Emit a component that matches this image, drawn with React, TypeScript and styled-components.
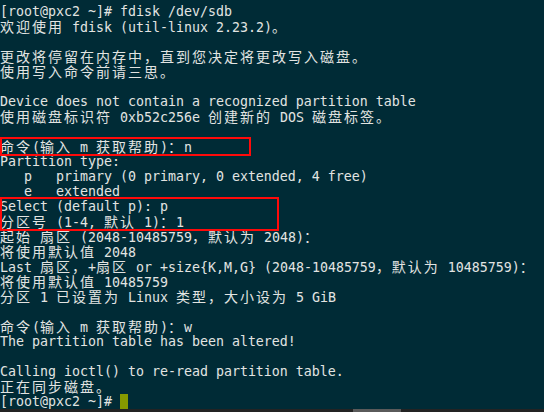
import React from "react";
import styled, { createGlobalStyle } from "styled-components";

const Global = createGlobalStyle`
  html, body {
    margin: 0;
    padding: 0;
    background: #002b36;
    width: 544px;
    height: 412px;
    overflow: hidden;
  }
`;

const Screen = styled.div`
  position: relative;
  width: 544px;
  height: 412px;
  background: #002b36;
  color: #e2e4e2;
  font-family: "DejaVu Sans Mono", "Liberation Mono", monospace;
  font-size: 13.29px;
  display: flex;
  flex-direction: column;
  overflow: hidden;
`;

const Output = styled.div`
  padding-top: 4px;
  display: flex;
  flex-direction: column;
  flex: 1;
`;

const Row = styled.div`
  height: 15px;
  line-height: 15px;
  white-space: pre;
  overflow: visible;
`;

const Wide = styled.span`
  font-family: "Noto Sans CJK SC", "Noto Sans CJK JP", sans-serif;
  font-size: 14px;
  letter-spacing: 2px;
  line-height: 15px;
`;

const Highlight = styled.div<{ $w: number }>`
  position: relative;
  &::after {
    content: "";
    position: absolute;
    left: 0;
    top: -2px;
    width: ${(p) => p.$w}px;
    height: calc(100% + 4px);
    border: 2px solid #ff0a0a;
    box-sizing: border-box;
    pointer-events: none;
  }
`;

const Cursor = styled.span`
  display: inline-block;
  width: 8px;
  height: 15px;
  background: #859900;
  vertical-align: top;
`;

const ScrollTrack = styled.div`
  position: absolute;
  left: 0;
  right: 0;
  bottom: 0;
  height: 3px;
  background: #232323;
`;

const ScrollThumb = styled.div`
  position: absolute;
  left: 353px;
  width: 48px;
  top: 0;
  bottom: 0;
  background: #5a5a5a;
`;

const CJK = /([\u3000-\u303f\u4e00-\u9fff\uff00-\uffef]+)/;

function TermLine({ text, children }: { text: string; children?: React.ReactNode }) {
  const parts = text.split(CJK);
  return (
    <Row>
      {parts.map((p, i) =>
        p === "" ? null : CJK.test(p) ? <Wide key={i}>{p}</Wide> : <React.Fragment key={i}>{p}</React.Fragment>
      )}
      {children}
    </Row>
  );
}

export default function App() {
  return (
    <>
      <Global />
      <Screen>
        <Output>
          <TermLine text="[root@pxc2 ~]# fdisk /dev/sdb" />
          <TermLine text="欢迎使用 fdisk (util-linux 2.23.2)。" />
          <TermLine text="" />
          <TermLine text="更改将停留在内存中，直到您决定将更改写入磁盘。" />
          <TermLine text="使用写入命令前请三思。" />
          <TermLine text="" />
          <TermLine text="Device does not contain a recognized partition table" />
          <TermLine text="使用磁盘标识符 0xb52c256e 创建新的 DOS 磁盘标签。" />
          <TermLine text="" />
          <Highlight $w={251}>
            <TermLine text="命令(输入 m 获取帮助)：n" />
          </Highlight>
          <TermLine text="Partition type:" />
          <TermLine text="   p   primary (0 primary, 0 extended, 4 free)" />
          <TermLine text="   e   extended" />
          <Highlight $w={279}>
            <TermLine text="Select (default p): p" />
            <TermLine text="分区号 (1-4, 默认 1)：1" />
          </Highlight>
          <TermLine text="起始 扇区 (2048-10485759，默认为 2048)：" />
          <TermLine text="将使用默认值 2048" />
          <TermLine text="Last 扇区，+扇区 or +size{K,M,G} (2048-10485759，默认为 10485759)：" />
          <TermLine text="将使用默认值 10485759" />
          <TermLine text="分区 1 已设置为 Linux 类型，大小设为 5 GiB" />
          <TermLine text="" />
          <TermLine text="命令(输入 m 获取帮助)：w" />
          <TermLine text="The partition table has been altered!" />
          <TermLine text="" />
          <TermLine text="Calling ioctl() to re-read partition table." />
          <TermLine text="正在同步磁盘。" />
          <TermLine text="[root@pxc2 ~]# ">
            <Cursor />
          </TermLine>
        </Output>
        <ScrollTrack>
          <ScrollThumb />
        </ScrollTrack>
      </Screen>
    </>
  );
}
